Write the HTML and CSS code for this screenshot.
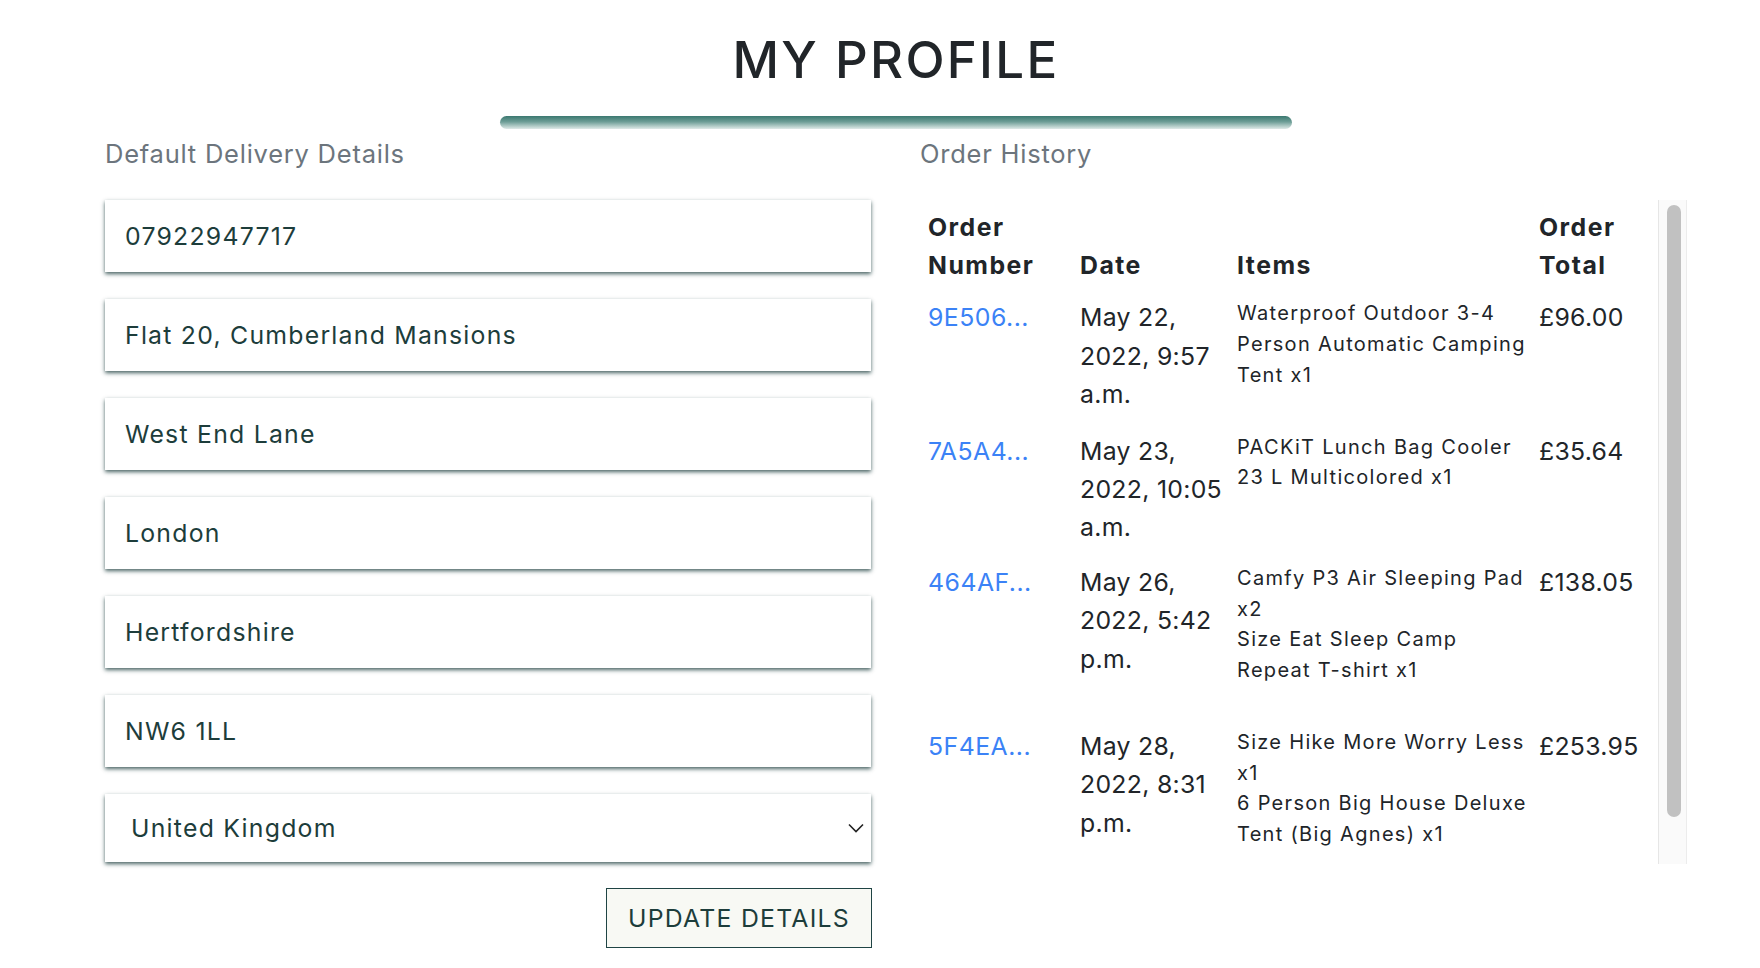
FILE: index.html
```html
<!DOCTYPE html>
<html lang="en">
<head>
<meta charset="utf-8">
<title>My Profile</title>
<link rel="stylesheet" href="styles.css">
</head>
<body>
<main class="profile">
  <h1 class="profile__title">MY PROFILE</h1>
  <div class="profile__rule"></div>
  <div class="profile__grid">
    <section class="delivery">
      <p class="section-label">Default Delivery Details</p>
      <form class="delivery__form">
        <input class="field" type="text" value="07922947717">
        <input class="field" type="text" value="Flat 20, Cumberland Mansions">
        <input class="field" type="text" value="West End Lane">
        <input class="field" type="text" value="London">
        <input class="field" type="text" value="Hertfordshire">
        <input class="field" type="text" value="NW6 1LL">
        <div class="select-wrap">
          <select class="field field--select">
            <option>United Kingdom</option>
          </select>
          <svg class="select-wrap__chevron" width="16" height="10" viewBox="0 0 16 10"><polyline points="1,1.5 8,8.5 15,1.5" fill="none" stroke="#222" stroke-width="1.6"/></svg>
        </div>
        <div class="delivery__actions">
          <button type="button" class="btn-update">UPDATE DETAILS</button>
        </div>
      </form>
    </section>
    <section class="orders">
      <p class="section-label">Order History</p>
      <div class="orders__panel">
        <div class="orders__viewport">
          <table class="orders__table">
            <colgroup>
              <col class="col-num"><col class="col-date"><col class="col-items"><col class="col-total">
            </colgroup>
            <thead>
              <tr><th>Order<br>Number</th><th>Date</th><th>Items</th><th>Order<br>Total</th></tr>
            </thead>
            <tbody>
              <tr>
                <td><a href="#" class="order-link">9E506...</a></td>
                <td class="date">May 22,<br>2022, 9:57<br>a.m.</td>
                <td class="items"><div class="items__list"><div>Waterproof Outdoor 3-4<br>Person Automatic Camping<br>Tent x1</div></div></td>
                <td class="total">£96.00</td>
              </tr>
              <tr>
                <td><a href="#" class="order-link">7A5A4...</a></td>
                <td class="date">May 23,<br>2022, 10:05<br>a.m.</td>
                <td class="items"><div class="items__list"><div>PACKiT Lunch Bag Cooler<br>23 L Multicolored x1</div></div></td>
                <td class="total">£35.64</td>
              </tr>
              <tr>
                <td><a href="#" class="order-link">464AF...</a></td>
                <td class="date">May 26,<br>2022, 5:42<br>p.m.</td>
                <td class="items"><div class="items__list"><div>Camfy P3 Air Sleeping Pad<br>x2</div><div>Size Eat Sleep Camp<br>Repeat T-shirt x1</div></div></td>
                <td class="total">£138.05</td>
              </tr>
              <tr>
                <td><a href="#" class="order-link">5F4EA...</a></td>
                <td class="date">May 28,<br>2022, 8:31<br>p.m.</td>
                <td class="items"><div class="items__list"><div>Size Hike More Worry Less<br>x1</div><div>6 Person Big House Deluxe<br>Tent (Big Agnes) x1</div></div></td>
                <td class="total">£253.95</td>
              </tr>
            </tbody>
          </table>
        </div>
        <div class="orders__scrollbar" aria-hidden="true">
          <div class="orders__thumb"></div>
        </div>
      </div>
    </section>
  </div>
</main>
</body>
</html>
```

FILE: styles.css
```css
* { box-sizing: border-box; }

html, body {
  margin: 0;
  background: #ffffff;
}

body {
  font-family: Inter, "Open Sans", "DejaVu Sans", sans-serif;
  color: #212529;
  letter-spacing: 0.055em;
}

.profile {
  width: 1582px;
  margin-left: 105px;
  padding-top: 29px;
}

.profile__title {
  margin: 0;
  text-align: center;
  font-size: 51px;
  line-height: 61px;
  font-weight: 500;
  letter-spacing: 0.045em;
  color: #212529;
}

.profile__rule {
  width: 792px;
  height: 13px;
  margin: 26px auto 0;
  border-radius: 7px;
  background: linear-gradient(to bottom, #3b7870 0%, #6e9e97 45%, #dfeae8 100%);
}

.profile__grid {
  display: grid;
  grid-template-columns: 766px 767px;
  column-gap: 49px;
}

.section-label {
  margin: 10px 0 31px;
  font-size: 25.5px;
  line-height: 30px;
  font-weight: 400;
  letter-spacing: 0.03em;
  color: #6c757d;
}

.delivery__form {
  display: flex;
  flex-direction: column;
  gap: 27px;
}

.field {
  display: block;
  width: 100%;
  height: 72px;
  padding: 0 20px;
  border: none;
  border-radius: 0;
  background: #ffffff;
  box-shadow: 0 2px 4px rgba(40, 72, 72, 0.85);
  font-family: inherit;
  font-size: 24.8px;
  letter-spacing: 0.05em;
  color: #1d3d3b;
  outline: none;
}

.select-wrap {
  position: relative;
}

.field--select {
  height: 68px;
  padding-left: 26px;
  -webkit-appearance: none;
  appearance: none;
}

.select-wrap__chevron {
  position: absolute;
  right: 7px;
  top: 29px;
  pointer-events: none;
}

.delivery__actions {
  display: flex;
  justify-content: flex-end;
  margin-top: -1px;
}

.btn-update {
  width: 266px;
  height: 60px;
  margin-right: -1px;
  border: 1.5px solid #1f4444;
  border-radius: 0;
  background: #f8f9f4;
  font-family: inherit;
  font-size: 24.8px;
  letter-spacing: 0.05em;
  color: #1d3d3b;
  padding: 0;
}

.orders__panel {
  display: flex;
  height: 664px;
}

.orders__viewport {
  flex: 1;
  min-width: 0;
  overflow: hidden;
}

.orders__scrollbar {
  flex: 0 0 29px;
  padding: 5px 5px 5px 8px;
  background: #fafafa;
  border-left: 1px solid #e6e6e6;
  border-right: 1px solid #ececec;
}

.orders__thumb {
  height: 612px;
  border-radius: 8px;
  background: #c1c1c1;
}

.orders__table {
  width: 100%;
  table-layout: fixed;
  border-collapse: collapse;
  font-size: 24.8px;
  line-height: 38.4px;
}

.col-num { width: 152px; }
.col-date { width: 157px; }
.col-items { width: 302px; }
.col-total { width: 127px; }

.orders__table th,
.orders__table td {
  padding: 8px;
  text-align: left;
  white-space: nowrap;
}

.orders__table th {
  vertical-align: bottom;
  padding-bottom: 5.5px;
  font-weight: 700;
  letter-spacing: 0.06em;
}

.orders__table td {
  vertical-align: top;
  font-weight: 400;
}

.orders__table .date,
.orders__table .total {
  letter-spacing: 0.012em;
}

.order-link {
  color: #3b82f6;
  text-decoration: none;
  letter-spacing: 0.02em;
}

.orders__table .items {
  font-size: 20px;
  line-height: 30.75px;
  letter-spacing: 0.065em;
}

.items__list {
  padding-bottom: 25px;
}
```
